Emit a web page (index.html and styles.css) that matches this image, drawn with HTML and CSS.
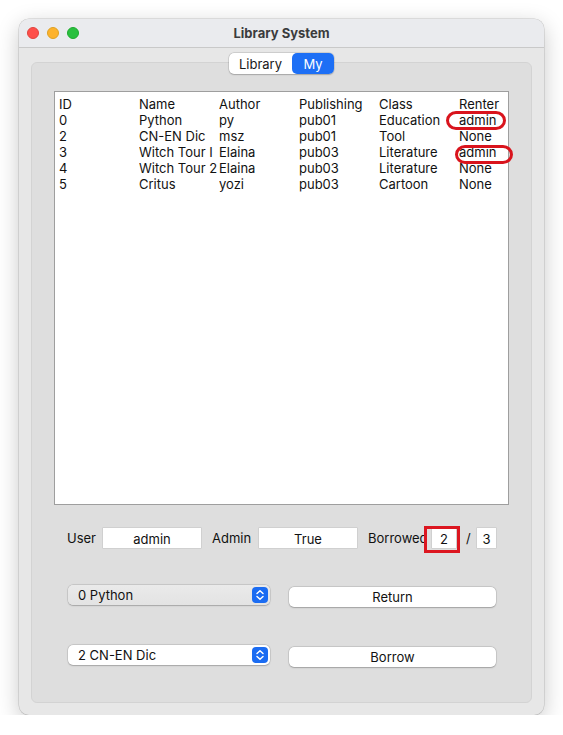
FILE: index.html
```html
<!DOCTYPE html>
<html>
<head>
<meta charset="utf-8">
<link rel="stylesheet" href="styles.css">
</head>
<body>
<div class="window">
  <div class="titlebar">
    <div class="lights"><span class="light red"></span><span class="light yellow"></span><span class="light green"></span></div>
    <div class="title">Library System</div>
    <div></div>
  </div>
  <div class="content">
    <div class="tabs"><span class="seg">Library</span><span class="seg active">My</span></div>
    <div class="group">
      <div class="table">
        <div class="row"><span>ID</span><span>Name</span><span>Author</span><span>Publishing</span><span>Class</span><span>Renter</span></div>
        <div class="row"><span>0</span><span>Python</span><span>py</span><span>pub01</span><span>Education</span><span>admin</span></div>
        <div class="row"><span>2</span><span>CN-EN Dic</span><span>msz</span><span>pub01</span><span>Tool</span><span>None</span></div>
        <div class="row"><span>3</span><span>Witch Tour I</span><span>Elaina</span><span>pub03</span><span>Literature</span><span>admin</span></div>
        <div class="row"><span>4</span><span>Witch Tour 2</span><span>Elaina</span><span>pub03</span><span>Literature</span><span>None</span></div>
        <div class="row"><span>5</span><span>Critus</span><span>yozi</span><span>pub03</span><span>Cartoon</span><span>None</span></div>
        <span class="mark mark1"></span>
        <span class="mark mark2"></span>
      </div>
      <div class="info">
        <span class="label l-user">User</span>
        <span class="field f-wide">admin</span>
        <span class="label l-admin">Admin</span>
        <span class="field f-wide">True</span>
        <span class="label l-borrow">Borrowed</span>
        <span class="field f-num">2<span class="box"></span></span>
        <span class="slash">/</span>
        <span class="field f-max">3</span>
      </div>
      <div class="actions">
        <div class="combo combo-gray"><span>0 Python</span>
          <svg class="step" width="16" height="16" viewBox="0 0 16 16"><rect width="16" height="16" rx="4" fill="#1b6cf2"/><path d="M5 6.5 L8 3.8 L11 6.5 M5 9.5 L8 12.2 L11 9.5" fill="none" stroke="#fff" stroke-width="1.5" stroke-linecap="round" stroke-linejoin="round"/></svg>
        </div>
        <div class="button">Return</div>
      </div>
      <div class="actions second">
        <div class="combo"><span>2 CN-EN Dic</span>
          <svg class="step" width="16" height="16" viewBox="0 0 16 16"><rect width="16" height="16" rx="4" fill="#1b6cf2"/><path d="M5 6.5 L8 3.8 L11 6.5 M5 9.5 L8 12.2 L11 9.5" fill="none" stroke="#fff" stroke-width="1.5" stroke-linecap="round" stroke-linejoin="round"/></svg>
        </div>
        <div class="button">Borrow</div>
      </div>
    </div>
  </div>
</div>
</body>
</html>
```
FILE: styles.css
```css
* { box-sizing: border-box; }
body {
  margin: 0;
  background: #ffffff;
  font-family: "Inter", "Liberation Sans", sans-serif;
  font-size: 13px;
  color: #111;
}
.window {
  margin: 19px 0 0 19px;
  width: 525px;
  height: 696px;
  border-radius: 10px;
  background: #e7e7e7;
  box-shadow: 0 0 0 0.5px rgba(0,0,0,0.18), 0 6px 22px rgba(0,0,0,0.22);
  overflow: hidden;
  display: flex;
  flex-direction: column;
}
.titlebar {
  height: 29px;
  flex: none;
  background: #eaebee;
  border-bottom: 1px solid #c9c9c9;
  display: grid;
  grid-template-columns: 1fr auto 1fr;
  align-items: center;
}
.lights { display: flex; gap: 8px; padding-left: 8px; }
.light { width: 12px; height: 12px; border-radius: 50%; }
.red { background: #fe4f4a; border: 0.5px solid #e0443e; }
.yellow { background: #fdb22c; border: 0.5px solid #dea123; }
.green { background: #29c03f; border: 0.5px solid #1eaa2f; }
.title {
  font-weight: 700;
  font-size: 13px;
  color: #3b3b3d;
}
.content {
  flex: 1;
  padding: 5px 12px 12px;
  display: flex;
  flex-direction: column;
}
.tabs {
  position: relative;
  z-index: 1;
  align-self: center;
  display: flex;
  height: 21px;
  background: #fff;
  border-radius: 5px;
  box-shadow: 0 0 0 0.5px rgba(0,0,0,0.15), 0 0.5px 1.5px rgba(0,0,0,0.2);
}
.seg {
  display: flex;
  align-items: center;
  justify-content: center;
  height: 21px;
  color: #1a1a1a;
}
.seg:first-child { width: 63px; }
.seg.active {
  width: 42px;
  background: #1d6ff5;
  color: #fff;
  border-radius: 5px;
}
.group {
  flex: 1;
  margin-top: -12px;
  border: 1px solid #d3d3d3;
  border-radius: 6px;
  background: #dedede;
  padding: 28px 22px 0;
}
.table {
  position: relative;
  width: 455px;
  height: 414px;
  background: #fff;
  border: 1px solid #9e9e9e;
  padding: 4px 0 0 4px;
}
.row {
  display: grid;
  grid-template-columns: repeat(6, 80px);
  line-height: 16px;
  height: 16px;
}
.row span { white-space: nowrap; overflow: hidden; }
.mark {
  position: absolute;
  border: 3px solid #d9141d;
  border-radius: 10px / 9.5px;
}
.mark1 { left: 391px; top: 19px; width: 60px; height: 19px; }
.mark2 { left: 400px; top: 53px; width: 58px; height: 19px; }
.info {
  margin-top: 23px;
  height: 20px;
  display: flex;
  align-items: center;
  padding-left: 13px;
}
.label { white-space: nowrap; }
.l-user { width: 36px; }
.l-admin { margin-left: 11px; width: 47px; }
.l-borrow { margin-left: 11px; width: 56px; overflow: hidden; }
.field {
  position: relative;
  height: 20px;
  background: #fff;
  display: flex;
  align-items: center;
  justify-content: center;
  box-shadow: 0 0 0 0.5px rgba(0,0,0,0.12);
  padding-top: 1px;
}
.f-wide { width: 98px; }
.f-num { margin-left: 8px; width: 24px; }
.f-max { width: 19px; }
.slash { margin-left: 10px; width: 11px; }
.box {
  position: absolute;
  left: -8px;
  top: -2px;
  right: -4px;
  bottom: -5px;
  border: 3px solid #dc1620;
}
.actions {
  margin-top: 37px;
  height: 22px;
  display: flex;
  align-items: flex-start;
  padding-left: 14px;
}
.actions.second { margin-top: 38px; }
.combo {
  width: 202px;
  height: 20px;
  border-radius: 5px;
  background: #fff;
  box-shadow: 0 0 0 0.5px rgba(0,0,0,0.14), 0 0.5px 1.5px rgba(0,0,0,0.2);
  display: flex;
  align-items: center;
  justify-content: space-between;
  padding: 0 2px 0 10px;
}
.combo-gray { background: linear-gradient(#eaeaea, #e3e3e3); }
.step { display: block; }
.button {
  margin-left: 19px;
  margin-top: 2px;
  width: 207px;
  height: 20px;
  border-radius: 5px;
  background: #fff;
  box-shadow: 0 0 0 0.5px rgba(0,0,0,0.14), 0 0.5px 1.5px rgba(0,0,0,0.22);
  display: flex;
  align-items: center;
  justify-content: center;
}
```
